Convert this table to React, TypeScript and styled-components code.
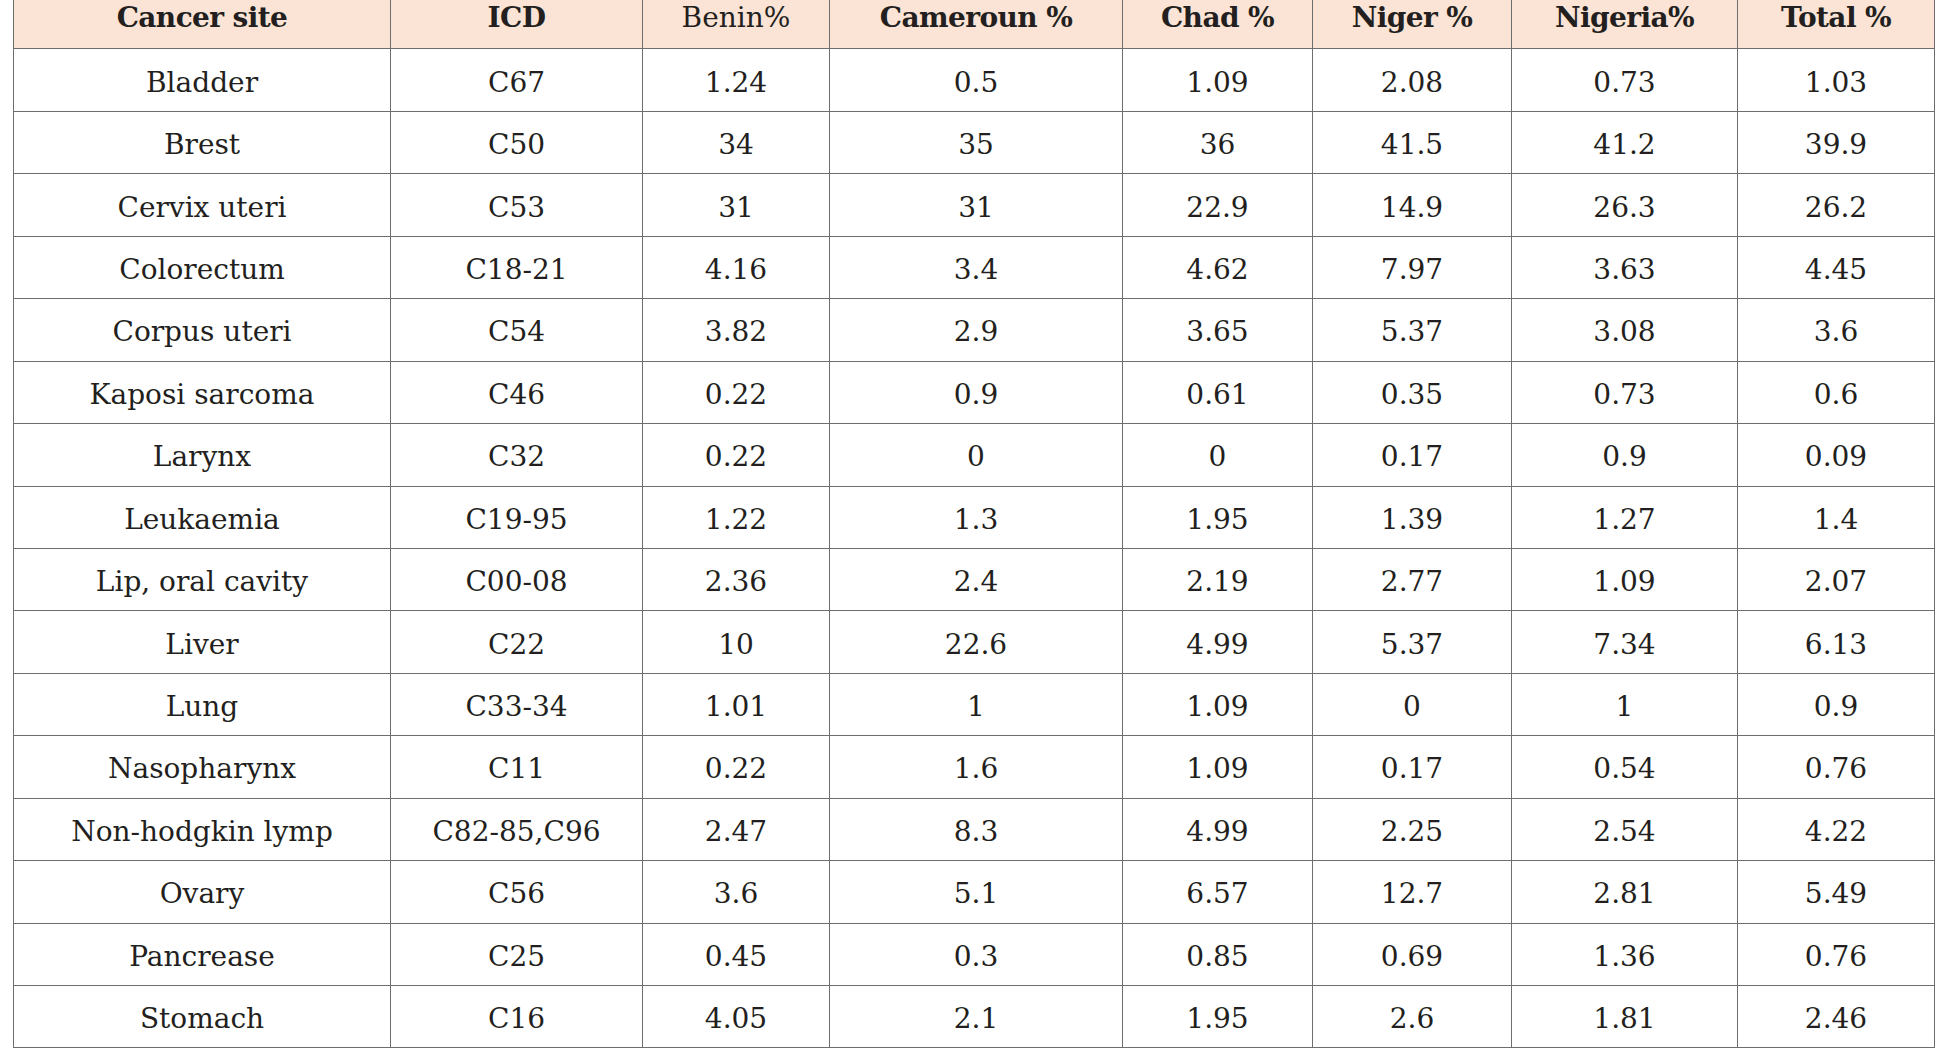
import React from "react";
import styled, { createGlobalStyle } from "styled-components";

const GlobalStyle = createGlobalStyle`
  html, body {
    margin: 0;
    padding: 0;
    background: #ffffff;
    overflow: hidden;
  }
  body {
    font-family: "DejaVu Serif", "Liberation Serif", serif;
    color: #231f20;
  }
`;

const Page = styled.div`
  width: 1939px;
  height: 1060px;
  overflow: hidden;
  padding-left: 13px;
  box-sizing: border-box;
`;

const Table = styled.table`
  border-collapse: collapse;
  table-layout: fixed;
  width: 1922px;
  margin-top: -14px;
  font-family: "DejaVu Serif", "Liberation Serif", serif;
  font-size: 28px;
  color: #231f20;
`;

const Row = styled.tr`
  height: 62.45px;
`;

const HeadCell = styled.th<{ $light?: boolean }>`
  background: #fbe4d5;
  border: 1px solid #6e6e6e;
  font-weight: ${(p) => (p.$light ? 400 : 700)};
  letter-spacing: ${(p) => (p.$light ? "0" : "-0.6px")};
  text-align: center;
  vertical-align: middle;
  padding: 0;
  white-space: nowrap;
`;

const Cell = styled.td`
  border: 1px solid #6e6e6e;
  text-align: center;
  vertical-align: middle;
  padding: 4px 0 0 0;
  white-space: nowrap;
`;

const widths = [377, 252, 187, 293, 190, 199, 226, 197];

const headers: { label: string; light?: boolean }[] = [
  { label: "Cancer site" },
  { label: "ICD" },
  { label: "Benin%", light: true },
  { label: "Cameroun %" },
  { label: "Chad %" },
  { label: "Niger %" },
  { label: "Nigeria%" },
  { label: "Total %" },
];

const rows: string[][] = [
  ["Bladder", "C67", "1.24", "0.5", "1.09", "2.08", "0.73", "1.03"],
  ["Brest", "C50", "34", "35", "36", "41.5", "41.2", "39.9"],
  ["Cervix uteri", "C53", "31", "31", "22.9", "14.9", "26.3", "26.2"],
  ["Colorectum", "C18-21", "4.16", "3.4", "4.62", "7.97", "3.63", "4.45"],
  ["Corpus uteri", "C54", "3.82", "2.9", "3.65", "5.37", "3.08", "3.6"],
  ["Kaposi sarcoma", "C46", "0.22", "0.9", "0.61", "0.35", "0.73", "0.6"],
  ["Larynx", "C32", "0.22", "0", "0", "0.17", "0.9", "0.09"],
  ["Leukaemia", "C19-95", "1.22", "1.3", "1.95", "1.39", "1.27", "1.4"],
  ["Lip, oral cavity", "C00-08", "2.36", "2.4", "2.19", "2.77", "1.09", "2.07"],
  ["Liver", "C22", "10", "22.6", "4.99", "5.37", "7.34", "6.13"],
  ["Lung", "C33-34", "1.01", "1", "1.09", "0", "1", "0.9"],
  ["Nasopharynx", "C11", "0.22", "1.6", "1.09", "0.17", "0.54", "0.76"],
  ["Non-hodgkin lymp", "C82-85,C96", "2.47", "8.3", "4.99", "2.25", "2.54", "4.22"],
  ["Ovary", "C56", "3.6", "5.1", "6.57", "12.7", "2.81", "5.49"],
  ["Pancrease", "C25", "0.45", "0.3", "0.85", "0.69", "1.36", "0.76"],
  ["Stomach", "C16", "4.05", "2.1", "1.95", "2.6", "1.81", "2.46"],
];

export default function App() {
  return (
    <Page>
      <GlobalStyle />
      <Table>
        <colgroup>
          {widths.map((w, i) => (
            <col key={i} style={{ width: w }} />
          ))}
        </colgroup>
        <thead>
          <Row>
            {headers.map((h) => (
              <HeadCell key={h.label} $light={h.light}>
                {h.label}
              </HeadCell>
            ))}
          </Row>
        </thead>
        <tbody>
          {rows.map((r) => (
            <Row key={r[0]}>
              {r.map((c, i) => (
                <Cell key={i}>{c}</Cell>
              ))}
            </Row>
          ))}
        </tbody>
      </Table>
    </Page>
  );
}
